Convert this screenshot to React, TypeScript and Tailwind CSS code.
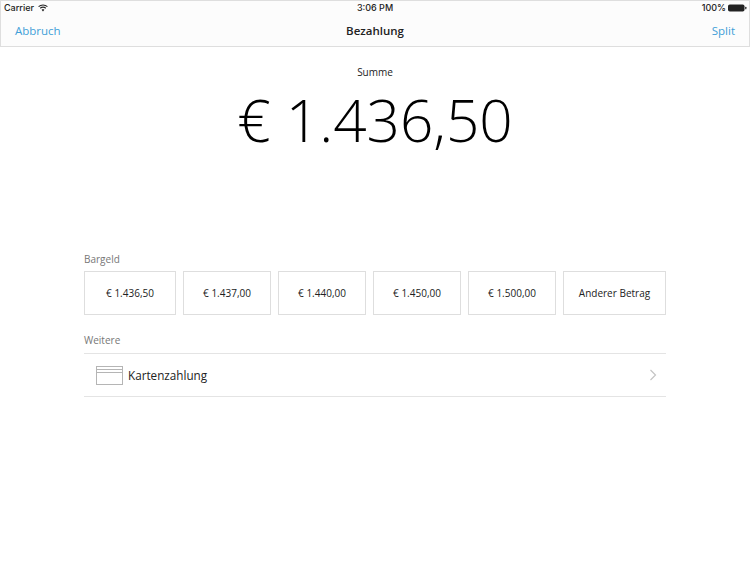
export default function App() {
  const amounts: [string, string][] = [
    ["€ 1.436,50", "w-[92px]"],
    ["€ 1.437,00", "w-[88px]"],
    ["€ 1.440,00", "w-[88px]"],
    ["€ 1.450,00", "w-[88px]"],
    ["€ 1.500,00", "w-[88px]"],
    ["Anderer Betrag", "w-[103px]"],
  ];
  return (
    <div className="relative w-[750px] h-[563px] bg-white overflow-hidden font-['Open_Sans',sans-serif] text-[#111]">
      <header className="h-[47px] bg-[#fcfcfc] border border-[#dedede] flex flex-col">
        <div className="h-[13px] flex items-center justify-between pl-[3px] pr-[2px] relative font-['Inter',sans-serif] font-medium text-[9px] text-[#222]">
          <div className="flex items-center gap-[4px]">
            <span>Carrier</span>
            <svg width="10" height="8" viewBox="0 0 10 8" fill="none" stroke="#222" strokeWidth="1.1">
              <path d="M0.6 2.6C3 0.4 7 0.4 9.4 2.6" />
              <path d="M2.2 4.2C3.8 2.9 6.2 2.9 7.8 4.2" />
              <path d="M5 7.4L3.6 5.8C4.4 5.2 5.6 5.2 6.4 5.8Z" fill="#222" stroke="none" />
            </svg>
          </div>
          <span className="absolute left-0 right-0 text-center">3:06 PM</span>
          <div className="flex items-center gap-[2px]">
            <span>100%</span>
            <svg width="19" height="8" viewBox="0 0 19 8">
              <rect x="0" y="0.5" width="16.5" height="7" rx="1.8" fill="#222" />
              <rect x="17.2" y="2.8" width="1.2" height="2.4" rx="0.5" fill="#222" />
            </svg>
          </div>
        </div>
        <div className="flex-1 pt-[2px] flex items-center justify-between px-[14px] relative text-[11.5px]">
          <span className="text-[#3f9fd8]">Abbruch</span>
          <span className="absolute left-0 right-0 text-center font-semibold text-[#222]">Bezahlung</span>
          <span className="text-[#3f9fd8]">Split</span>
        </div>
      </header>
      <main className="flex flex-col items-center">
        <div className="mt-[17px] h-[16px] leading-[16px] text-[10px] text-[#222]">Summe</div>
        <div className="mt-[3px] h-[72px] leading-[72px] font-light text-[58.5px] text-black whitespace-nowrap">€ 1.436,50</div>
        <section className="mt-[96px] w-[582px]">
          <div className="h-[16px] leading-[16px] text-[10px] text-[#777]">Bargeld</div>
          <div className="mt-[4px] flex justify-between">
            {amounts.map(([t, w]) => (
              <div key={t} className={`${w} h-[44px] border border-[#dedede] flex items-center justify-center text-[10px] text-[#222] whitespace-nowrap`}>
                {t}
              </div>
            ))}
          </div>
          <div className="mt-[17px] h-[16px] leading-[16px] text-[10px] text-[#777]">Weitere</div>
          <div className="mt-[5px] h-[44px] border-y border-[#e4e4e4] flex items-center pl-[12px] pr-[9px]">
            <svg width="27" height="19" viewBox="0 0 27 19" fill="none" stroke="#b5b5b5" strokeWidth="1">
              <rect x="0.5" y="0.5" width="26" height="18" />
              <path d="M0.5 3.5H26.5M0.5 6.5H26.5" />
            </svg>
            <span className="ml-[5px] pt-[2px] text-[11.7px] text-[#222]">Kartenzahlung</span>
            <svg className="ml-auto" width="8" height="12" viewBox="0 0 8 12" fill="none" stroke="#c4c4c4" strokeWidth="1.2">
              <path d="M1.5 1L6.5 6L1.5 11" />
            </svg>
          </div>
        </section>
      </main>
    </div>
  );
}
